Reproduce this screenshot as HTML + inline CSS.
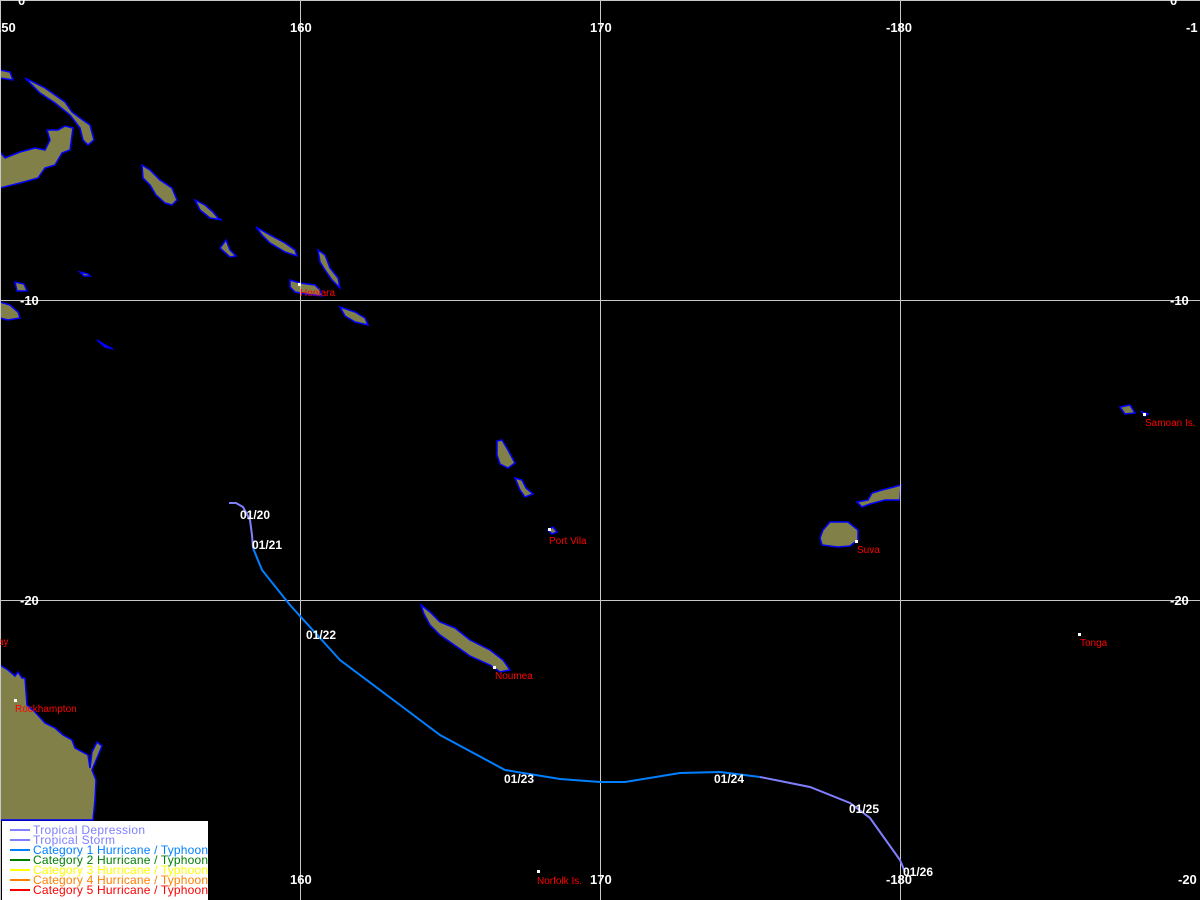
<!DOCTYPE html>
<html><head><style>
html,body{margin:0;padding:0;background:#000;width:1200px;height:900px;overflow:hidden}
svg{display:block}
.g{stroke:#c8c8c8;stroke-width:1}
.l{fill:#808048;stroke:#0000ff;stroke-width:1.5}
.ax{fill:#fff;font:bold 13px "Liberation Sans",sans-serif}
.c{fill:#ff0000;font:10px "Liberation Sans",sans-serif}
.d{fill:#fff;font:bold 12px "Liberation Sans",sans-serif}
.lg{font:12px "Liberation Sans",sans-serif}
</style></head><body>
<svg width="1200" height="900" xmlns="http://www.w3.org/2000/svg">
<rect width="1200" height="900" fill="#000"/>
<polygon class="l" points="0,70 10,72 13,80 0,78"/>
<polygon class="l" points="25,78 45,88 65,102 72,112 80,118 90,125 94,140 88,145 83,140 80,128 70,115 55,103 40,93"/>
<polygon class="l" points="0,152 5,158 20,152 35,148 45,150 50,140 47,130 58,130 65,126 73,128 70,150 62,153 55,165 45,168 38,178 20,183 0,188"/>
<polygon class="l" points="142,165 150,170 160,180 172,188 177,200 172,205 165,203 156,195 150,185 143,178"/>
<polygon class="l" points="195,200 205,205 213,212 218,218 222,220 210,218 200,210"/>
<polygon class="l" points="220,248 226,240 230,250 236,256 230,257"/>
<polygon class="l" points="256,227 270,235 285,243 295,250 297,256 285,252 270,243 262,235"/>
<polygon class="l" points="318,250 325,255 330,268 338,278 340,288 332,280 325,270 320,262"/>
<polygon class="l" points="80,272 88,274 90,276 84,276"/>
<polygon class="l" points="290,280 300,283 315,285 320,290 322,296 305,294 295,292 290,287"/>
<polygon class="l" points="340,307 355,312 365,318 368,325 355,322 345,316"/>
<polygon class="l" points="15,282 24,284 27,291 17,291"/>
<polygon class="l" points="0,302 10,305 18,312 20,318 8,320 0,318"/>
<polygon class="l" points="97,340 105,345 113,349 105,347"/>
<polygon class="l" points="497,441 502,440 508,450 515,463 508,468 500,464 497,455"/>
<polygon class="l" points="515,478 522,480 526,488 533,494 525,497 520,490"/>
<polygon class="l" points="548,530 553,527 557,532 552,534"/>
<polygon class="l" points="823,530 830,522 848,522 858,530 858,540 850,546 838,547 822,545 820,538"/>
<polygon class="l" points="857,502 868,500 872,493 882,490 890,488 901,485 900,500 885,500 870,504 862,507"/>
<polygon class="l" points="1120,407 1130,405 1135,413 1125,414"/>
<polygon class="l" points="1142,412 1148,414 1145,416"/>
<polygon class="l" points="421,605 430,612 440,622 455,628 470,640 490,650 503,660 510,670 500,672 490,665 470,656 450,642 440,635 430,625 424,614"/>
<polygon class="l" points="0,665 8,670 15,676 18,672 22,678 25,678 27,705 35,712 45,723 55,728 63,735 72,740 75,748 88,755 90,768 92,752 97,742 102,746 97,758 92,770 96,780 95,800 93,820 0,820"/>
<line class="g" x1="0.5" y1="0" x2="0.5" y2="900"/>
<line class="g" x1="300.5" y1="0" x2="300.5" y2="900"/>
<line class="g" x1="600.5" y1="0" x2="600.5" y2="900"/>
<line class="g" x1="900.5" y1="0" x2="900.5" y2="900"/>
<line class="g" x1="0" y1="0.5" x2="1200" y2="0.5"/>
<line class="g" x1="0" y1="300.5" x2="1200" y2="300.5"/>
<line class="g" x1="0" y1="600.5" x2="1200" y2="600.5"/>
<text class="ax" x="-6" y="32">150</text>
<text class="ax" x="290" y="32">160</text>
<text class="ax" x="590" y="32">170</text>
<text class="ax" x="886" y="32">-180</text>
<text class="ax" x="1186" y="32">-1</text>
<text class="ax" x="18" y="5">0</text>
<text class="ax" x="1170" y="5">0</text>
<text class="ax" x="20" y="305">-10</text>
<text class="ax" x="1170" y="305">-10</text>
<text class="ax" x="20" y="605">-20</text>
<text class="ax" x="1170" y="605">-20</text>
<text class="ax" x="290" y="884">160</text>
<text class="ax" x="590" y="884">170</text>
<text class="ax" x="886" y="884">-180</text>
<text class="ax" x="1178" y="884">-20</text>
<g fill="#fff"><rect x="298" y="283" width="3" height="3"/><rect x="548" y="528" width="3" height="3"/><rect x="855" y="540" width="3" height="3"/><rect x="1143" y="413" width="3" height="3"/><rect x="1078" y="633" width="3" height="3"/><rect x="493" y="666" width="3" height="3"/><rect x="14" y="699" width="3" height="3"/><rect x="537" y="870" width="3" height="3"/></g>
<text class="c" x="300" y="296">Honiara</text>
<text class="c" x="549" y="544">Port Vila</text>
<text class="c" x="857" y="553">Suva</text>
<text class="c" x="1145" y="426">Samoan Is.</text>
<text class="c" x="1080" y="646">Tonga</text>
<text class="c" x="495" y="679">Noumea</text>
<text class="c" x="15" y="712">Rockhampton</text>
<text class="c" x="537" y="884">Norfolk Is.</text>
<text class="c" x="-2" y="645">ay</text>
<polyline fill="none" stroke="#8080ff" stroke-width="2" points="229,503 236,503 243,507 250,520 252,535 253,548"/>
<polyline fill="none" stroke="#0080ff" stroke-width="2" points="253,548 262,570 290,605 340,660 400,705 440,735 505,770 560,779 600,782 625,782 680,773 720,772 760,777"/>
<polyline fill="none" stroke="#8080ff" stroke-width="2" points="760,777 810,787 850,803 870,818 900,860 905,872"/>
<text class="d" x="240" y="519">01/20</text>
<text class="d" x="252" y="549">01/21</text>
<text class="d" x="306" y="639">01/22</text>
<text class="d" x="504" y="783">01/23</text>
<text class="d" x="714" y="783">01/24</text>
<text class="d" x="849" y="813">01/25</text>
<text class="d" x="903" y="876">01/26</text>
<rect x="2" y="821" width="206" height="79" fill="#fff"/>
<g stroke-width="2">
<line x1="10" y1="830" x2="30" y2="830" stroke="#8080ff"/>
<line x1="10" y1="840" x2="30" y2="840" stroke="#8080ff"/>
<line x1="10" y1="850" x2="30" y2="850" stroke="#0080ff"/>
<line x1="10" y1="860" x2="30" y2="860" stroke="#008000"/>
<line x1="10" y1="870" x2="30" y2="870" stroke="#ffff00"/>
<line x1="10" y1="880" x2="30" y2="880" stroke="#ff8000"/>
<line x1="10" y1="890" x2="30" y2="890" stroke="#ff0000"/>
</g>
<text class="lg" x="33" y="834" fill="#8080ff" textLength="112">Tropical Depression</text>
<text class="lg" x="33" y="844" fill="#8080ff" textLength="82">Tropical Storm</text>
<text class="lg" x="33" y="854" fill="#0080ff" textLength="175">Category 1 Hurricane / Typhoon</text>
<text class="lg" x="33" y="864" fill="#008000" textLength="175">Category 2 Hurricane / Typhoon</text>
<text class="lg" x="33" y="874" fill="#ffff00" textLength="175">Category 3 Hurricane / Typhoon</text>
<text class="lg" x="33" y="884" fill="#ff8000" textLength="175">Category 4 Hurricane / Typhoon</text>
<text class="lg" x="33" y="894" fill="#ff0000" textLength="175">Category 5 Hurricane / Typhoon</text>
</svg>
</body></html>
